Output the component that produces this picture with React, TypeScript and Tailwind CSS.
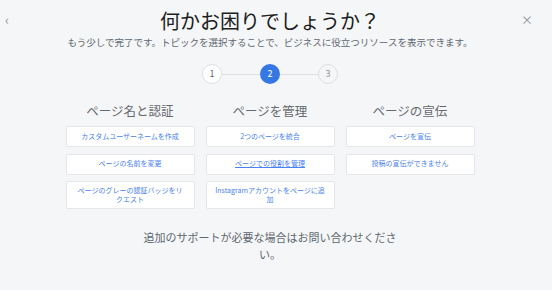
import React from "react";

const font = { fontFamily: '"Noto Sans CJK JP", "Noto Sans", sans-serif' };

function Box({ children, tall, underline }: { children: React.ReactNode; tall?: boolean; underline?: boolean }) {
  return (
    <div
      className={`w-[129px] ${tall ? "h-[28px]" : "h-[21px]"} bg-white border border-[#e4e6e9] rounded-[2px] flex items-center justify-center px-2 text-center text-[7px] leading-[9.5px] text-[#4a82f0] ${underline ? "underline" : ""}`}
    >
      <span>{children}</span>
    </div>
  );
}

function Column({ title, items }: { title: string; items: { t: string; tall?: boolean; u?: boolean }[] }) {
  return (
    <div className="w-[129px] flex flex-col items-center">
      <div className="h-[16px] leading-[16px] text-[12.5px] text-[#666a70] mb-[7px] whitespace-nowrap">{title}</div>
      <div className="flex flex-col gap-[6.5px] w-full">
        {items.map((it, i) => (
          <Box key={i} tall={it.tall} underline={it.u}>
            {it.t}
          </Box>
        ))}
      </div>
    </div>
  );
}

export default function App() {
  return (
    <div className="relative w-[552px] h-[290px] bg-[#f5f6f7] overflow-hidden" style={font}>
      <div className="absolute left-[5px] top-[12px] text-[#90949c] text-[13px] leading-[16px]">‹</div>
      <div className="absolute left-[521px] top-[12px] text-[#90949c] text-[12px] leading-[16px]">×</div>
      <div className="w-[540px] flex flex-col items-center pt-[9px]">
        <h1 className="text-[20px] leading-[24px] text-[#1c1e21] font-normal">何かお困りでしょうか？</h1>
        <p className="mt-[3px] text-[9.5px] leading-[12px] text-[#606770] whitespace-nowrap">
          もう少しで完了です。トピックを選択することで、ビジネスに役立つリソースを表示できます。
        </p>
        <div className="mt-[16px] flex items-center">
          <div className="w-[20px] h-[20px] rounded-full bg-white border border-[#dddfe2] flex items-center justify-center text-[9px] text-[#606770]">1</div>
          <div className="w-[38px] h-px bg-[#dddfe2]" />
          <div className="w-[20px] h-[20px] rounded-full bg-[#3578e5] flex items-center justify-center text-[9px] text-white">2</div>
          <div className="w-[38px] h-px bg-[#dddfe2]" />
          <div className="w-[20px] h-[20px] rounded-full bg-[#f5f6f7] border border-[#dddfe2] flex items-center justify-center text-[9px] text-[#90949c]">3</div>
        </div>
        <div className="mt-[19px] flex gap-[11px] items-start">
          <Column
            title="ページ名と認証"
            items={[
              { t: "カスタムユーザーネームを作成" },
              { t: "ページの名前を変更" },
              { t: "ページのグレーの認証バッジをリクエスト", tall: true },
            ]}
          />
          <Column
            title="ページを管理"
            items={[
              { t: "2つのページを統合" },
              { t: "ページでの役割を管理", u: true },
              { t: "Instagramアカウントをページに追加", tall: true },
            ]}
          />
          <Column
            title="ページの宣伝"
            items={[{ t: "ページを宣伝" }, { t: "投稿の宣伝ができません" }]}
          />
        </div>
        <p className="mt-[20px] w-[262px] text-center text-[11px] leading-[17px] text-[#606770]">
          追加のサポートが必要な場合はお問い合わせください。
        </p>
      </div>
    </div>
  );
}
